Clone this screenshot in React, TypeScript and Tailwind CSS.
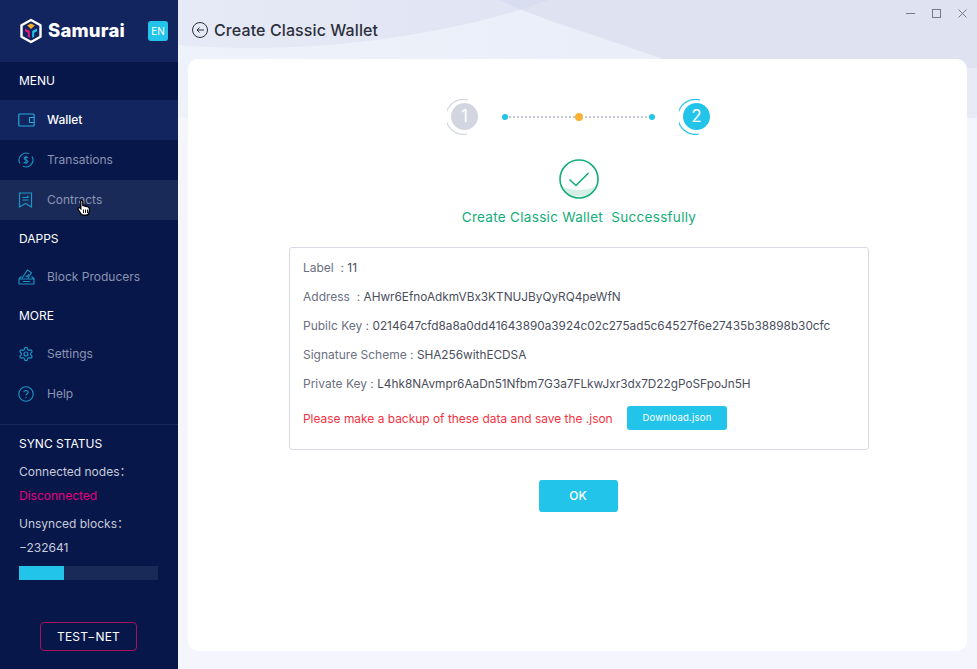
import React from "react";

const font = { fontFamily: "Inter, 'Noto Sans', 'Noto Sans CJK SC', sans-serif" };

function Logo() {
  return (
    <svg width="24" height="26" viewBox="0 0 24 26" className="shrink-0">
      <path d="M12 2 21.500 7.300v11.400L12 24 2.500 18.700V7.300z" fill="none" stroke="#fff" strokeWidth="2.400" strokeLinejoin="round" />
      <path d="M8 7.500 12 5.500l4 2-1 .8-3 2.700-3-2.700z" fill="#f5ae2d" />
      <path d="M6 10.500 10.800 13v6.800l-2-1.100v-4L6 13.200z" fill="#e6177a" />
      <path d="M18 10.500 13.200 13v6.800l2-1.100v-4l2.800-1.500z" fill="#23c4ea" />
    </svg>
  );
}

const ic = "#1b93c4";

function WalletIcon() {
  return (
    <svg width="17" height="14" viewBox="0 0 17 14" fill="none" stroke="#23a9d8" strokeWidth="1.200">
      <rect x="0.800" y="1" width="15.400" height="12" rx="1" />
      <path d="M16 4.500h-4.500v5H16" />
    </svg>
  );
}
function DollarIcon() {
  return (
    <svg width="16" height="16" viewBox="0 0 16 16" fill="none" stroke={ic} strokeWidth="1.100">
      <path d="M2 11.500A7 7 0 0 1 11 1.700M14 4.500A7 7 0 0 1 5 14.300" />
      <path d="M10 5.800C9.500 4.900 6.200 4.700 6.100 6.300c0 1.900 3.900 1.300 3.900 3.300 0 1.700-3.400 1.500-4.100.5M8 3.800v8.400" />
    </svg>
  );
}
function ContractIcon() {
  return (
    <svg width="15" height="16" viewBox="0 0 15 16" fill="none" stroke={ic} strokeWidth="1.200">
      <path d="M1.500 1h12v14l-6-3.500-6 3.500z" />
      <path d="M4.500 5.500h6M4.500 8h6M9 4l1.500 1.500" />
    </svg>
  );
}
function VoteIcon() {
  return (
    <svg width="17" height="16" viewBox="0 0 17 16" fill="none" stroke={ic} strokeWidth="1.100">
      <path d="M1 9.500V15h15V9.500l-2.500-2M1 9.500l2.500-2M1 10h15" />
      <path d="M3.800 9.500 9.500 1l4 2.800-3.800 5.700" />
      <path d="M7.500 6.500 9 7.800l2-2.600M5 12.500h7" />
    </svg>
  );
}
function GearIcon() {
  return (
    <svg width="16" height="16" viewBox="0 0 24 24" fill="none" stroke={ic} strokeWidth="1.800" strokeLinejoin="round">
      <path d="M12.220 2h-.44a2 2 0 0 0-2 2v.18a2 2 0 0 1-1 1.730l-.43.250a2 2 0 0 1-2 0l-.150-.080a2 2 0 0 0-2.730.730l-.220.380a2 2 0 0 0 .730 2.730l.150.100a2 2 0 0 1 1 1.720v.510a2 2 0 0 1-1 1.740l-.150.090a2 2 0 0 0-.730 2.730l.220.380a2 2 0 0 0 2.730.730l.150-.080a2 2 0 0 1 2 0l.430.250a2 2 0 0 1 1 1.730V20a2 2 0 0 0 2 2h.440a2 2 0 0 0 2-2v-.180a2 2 0 0 1 1-1.730l.430-.250a2 2 0 0 1 2 0l.150.080a2 2 0 0 0 2.730-.730l.220-.390a2 2 0 0 0-.730-2.730l-.150-.080a2 2 0 0 1-1-1.740v-.500a2 2 0 0 1 1-1.740l.150-.090a2 2 0 0 0 .730-2.730l-.220-.380a2 2 0 0 0-2.730-.730l-.150.080a2 2 0 0 1-2 0l-.430-.250a2 2 0 0 1-1-1.730V4a2 2 0 0 0-2-2z" />
      <circle cx="12" cy="12" r="3" />
    </svg>
  );
}
function HelpIcon() {
  return (
    <svg width="16" height="16" viewBox="0 0 16 16" fill="none" stroke={ic} strokeWidth="1.100">
      <circle cx="8" cy="8" r="7.200" />
      <path d="M5.800 6.200C5.900 3.900 10.200 3.900 10.200 6.200c0 1.600-2.200 1.600-2.200 3.300" />
      <path d="M8 11v1.200" />
    </svg>
  );
}
function Cursor() {
  return (
    <svg width="14" height="17" viewBox="0 0 14 17" className="absolute left-[77px] top-[199px]">
      <path d="M3.800 1.500c1-.5 2 .2 2 1.200v3.800l4.200 1c1.400.4 2.500 1.300 2.500 2.800l-.5 3c-.2 1.500-1.200 2.800-2.900 2.800H6.500c-1.200 0-2-.6-2.700-1.500L1.200 10.500c-.8-1.200.6-2.500 1.800-1.500l.8.7V2.700c0-.4-.1-.9 0-1.200z" fill="#fff" stroke="#000" strokeWidth="1.300" />
      <path d="M6.500 10.500v3.500M8.500 10.500v3.500M10.500 10.500v3.500" stroke="#000" strokeWidth="0.900" />
    </svg>
  );
}

function NavItem({ icon, label, state }: { icon: React.ReactNode; label: string; state?: "active" | "hover" }) {
  const cls = state === "active" ? "bg-[#12255e] text-white font-medium" : state === "hover" ? "bg-[#1a2a58] text-[#8a94b2]" : "text-[#8a94b2]";
  return (
    <div className={`h-10 flex items-center text-[12px] ${cls}`}>
      <div className="w-[47px] pl-[18px] flex items-center">{icon}</div>
      <span>{label}</span>
    </div>
  );
}

function SectionTitle({ children, className }: { children: React.ReactNode; className: string }) {
  return <div className={`pl-[19px] text-[12px] text-white flex items-center ${className}`}>{children}</div>;
}

function Sidebar() {
  return (
    <aside className="w-[178px] h-[669px] shrink-0 bg-[#08174a] flex flex-col relative">
      <div className="h-[62px] bg-[#12255e] flex items-center pl-[19px]">
        <Logo />
        <span className="ml-[5px] text-white text-[18.500px] font-extrabold tracking-[0.2px] w-[100px]">Samurai</span>
        <span className="w-5 h-5 rounded-[3px] bg-[#23c4ea] text-white text-[10px] flex items-center justify-center">EN</span>
      </div>
      <SectionTitle className="h-[38px]">MENU</SectionTitle>
      <NavItem icon={<WalletIcon />} label="Wallet" state="active" />
      <NavItem icon={<DollarIcon />} label="Transations" />
      <NavItem icon={<ContractIcon />} label="Contracts" state="hover" />
      <SectionTitle className="h-[37px]">DAPPS</SectionTitle>
      <NavItem icon={<VoteIcon />} label="Block Producers" />
      <SectionTitle className="h-[37px]">MORE</SectionTitle>
      <NavItem icon={<GearIcon />} label="Settings" />
      <NavItem icon={<HelpIcon />} label="Help" />
      <div className="mt-[10px] border-t border-[#1a2a58] pt-[9px] px-[19px] text-[12px] text-[#c6cbdb]">
        <div className="h-[19px] text-white flex items-center">SYNC STATUS</div>
        <div className="h-[24px] mt-[7px] flex items-center">Connected nodes：</div>
        <div className="h-[24px] flex items-center text-[#e6007e]">Disconnected</div>
        <div className="h-[24px] mt-[4px] flex items-center">Unsynced blocks：</div>
        <div className="h-[24px] flex items-center">−232641</div>
        <div className="h-[14px] mt-[6px] w-[139px] bg-[#1a2a58]">
          <div className="h-full w-[45px] bg-[#23c4ea]" />
        </div>
        <div className="mt-[42px] ml-[21px] w-[97px] h-[29px] rounded-[4px] border border-[#a3125f] text-white flex items-center justify-center tracking-[0.2px]">
          TEST−NET
        </div>
      </div>
      <Cursor />
    </aside>
  );
}

function StepBadge({ n, color, bg }: { n: string; color: string; bg: string }) {
  return (
    <div className="relative w-[32px] h-[36px] -mt-[1px] flex items-center justify-center">
      <svg width="32" height="36" viewBox="0 0 32 36" className="absolute left-0 top-0" fill="none" stroke={color} strokeWidth="1.200">
        <path d="M21 1A17.500 17.500 0 1 0 20 35" />
      </svg>
      <span className={`ml-[3px] w-[27px] h-[27px] rounded-full text-white text-[17px] flex items-center justify-center ${bg}`}>{n}</span>
    </div>
  );
}

function Steps() {
  return (
    <div className="flex items-center justify-center h-[36px]">
      <StepBadge n="1" color="#d3d6e0" bg="bg-[#d3d6e0]" />
      <div className="relative ml-[23px] mr-[24px] w-[153px] h-[8px] flex items-center justify-between">
        <div className="absolute left-0 right-0 top-[3px] border-t-2 border-dotted border-[#c4c8d4]" />
        <span className="relative w-[6px] h-[6px] rounded-full bg-[#23c4ea]" />
        <span className="relative w-[8px] h-[8px] rounded-full bg-[#f9b233]" />
        <span className="relative w-[6px] h-[6px] rounded-full bg-[#23c4ea]" />
      </div>
      <StepBadge n="2" color="#23c4ea" bg="bg-[#23c4ea]" />
    </div>
  );
}

function SuccessIcon() {
  return (
    <svg width="40" height="40" viewBox="0 0 40 40" fill="none">
      <path d="M3 27c6 5 28 5 34 0a19 19 0 0 1-34 0z" fill="#d5efe5" />
      <circle cx="20" cy="20" r="19" stroke="#12ad78" strokeWidth="1.600" />
      <path d="M10.500 20.500 17 26.500 29.500 14" stroke="#12ad78" strokeWidth="1.600" />
    </svg>
  );
}

function Row({ label, value }: { label: string; value: string }) {
  return (
    <div className="h-[29px] leading-[29px] whitespace-pre text-[11.800px]">
      <span className="text-[#6b7080] text-[12px]">{label}</span>
      <span className="text-[#4a4e5c]">{value}</span>
    </div>
  );
}

export default function App() {
  return (
    <div className="relative w-[977px] h-[669px] overflow-hidden flex bg-[#f5f6fd]" style={font}>
      <Sidebar />
      <main className="relative flex-1 min-w-0">
        <svg className="absolute left-0 top-0" width="799" height="118" viewBox="0 0 799 118">
          <defs>
            <linearGradient id="bgLeft" x1="0" x2="1" y1="0" y2="0">
              <stop offset="0" stopColor="#e6eaf6" />
              <stop offset="1" stopColor="#e0e4f3" />
            </linearGradient>
            <linearGradient id="bgLight" x1="0" x2="1" y1="0" y2="0">
              <stop offset="0" stopColor="#eef2fb" />
              <stop offset="1" stopColor="#e8ebf6" />
            </linearGradient>
          </defs>
          <rect width="799" height="118" fill="url(#bgLight)" />
          <path d="M0 0H372C300 26 190 48 76 48 46 48 20 47 0 45z" fill="url(#bgLeft)" />
          <path d="M321 0H799V68C640 75 520 72 485 59 420 36 370 22 321 0z" fill="#dfe3f1" />
          <path d="M321 0H372L342 9.500z" fill="#d8ddf0" />
        </svg>
        <div className="relative h-[59px] flex items-start pt-[22px] pl-[14px]">
          <svg width="16" height="16" viewBox="0 0 16 16" fill="none" stroke="#2c2f3a" strokeWidth="1">
            <circle cx="8" cy="8" r="7.500" />
            <path d="M12 8H5M7.500 5.500 5 8l2.500 2.500" />
          </svg>
          <h1 className="ml-[6px] -mt-[1px] text-[16px] leading-[18px] font-medium text-[#2c2f3a] whitespace-nowrap tracking-[0.1px]">Create Classic Wallet</h1>
        </div>
        <div className="absolute right-0 top-0 flex items-center pr-[10px] pt-[9px] gap-[17px]">
          <svg width="9" height="9" viewBox="0 0 9 9" stroke="#777b88" strokeWidth="1"><path d="M0 4.500h9" /></svg>
          <svg width="9" height="9" viewBox="0 0 9 9" fill="none" stroke="#777b88" strokeWidth="1"><rect x="0.500" y="0.500" width="8" height="8" /></svg>
          <svg width="9" height="9" viewBox="0 0 9 9" stroke="#777b88" strokeWidth="1"><path d="M0.500 0.500l8 8M8.500 0.500l-8 8" /></svg>
        </div>
        <section className="relative ml-[10px] w-[779px] h-[592px] bg-white rounded-[10px] pt-[40px] pl-[3px] flex flex-col items-center">
          <Steps />
          <div className="mt-[24px]"><SuccessIcon /></div>
          <div className="mt-[8px] text-[13.500px] text-[#12ad78] whitespace-pre tracking-[0.3px]">Create Classic Wallet  Successfully</div>
          <div className="mt-[20px] w-[580px] h-[203px] rounded-[3px] border border-[#d8dae3] pl-[13px] pr-[13px] pt-[5px]">
            <Row label="Label  : " value="11" />
            <Row label="Address  : " value="AHwr6EfnoAdkmVBx3KTNUJByQyRQ4peWfN" />
            <Row label="Pubilc Key : " value="0214647cfd8a8a0dd41643890a3924c02c275ad5c64527f6e27435b38898b30cfc" />
            <Row label="Signature Scheme : " value="SHA256withECDSA" />
            <Row label="Private Key : " value="L4hk8NAvmpr6AaDn51Nfbm7G3a7FLkwJxr3dx7D22gPoSFpoJn5H" />
            <div className="mt-[8px] h-[24px] flex items-center text-[11.950px]">
              <span className="text-[#f5333f] w-[324px] mt-[2px]">Please make a backup of these data and save the .json</span>
              <span className="w-[100px] h-[24px] rounded-[3px] bg-[#23c4ea] text-white text-[9.500px] flex items-center justify-center tracking-[0.2px]">Download.json</span>
            </div>
          </div>
          <div className="mt-[30px] mr-[2px] w-[79px] h-[32px] rounded-[3px] bg-[#23c4ea] text-white text-[12px] font-medium flex items-center justify-center">OK</div>
        </section>
      </main>
    </div>
  );
}
